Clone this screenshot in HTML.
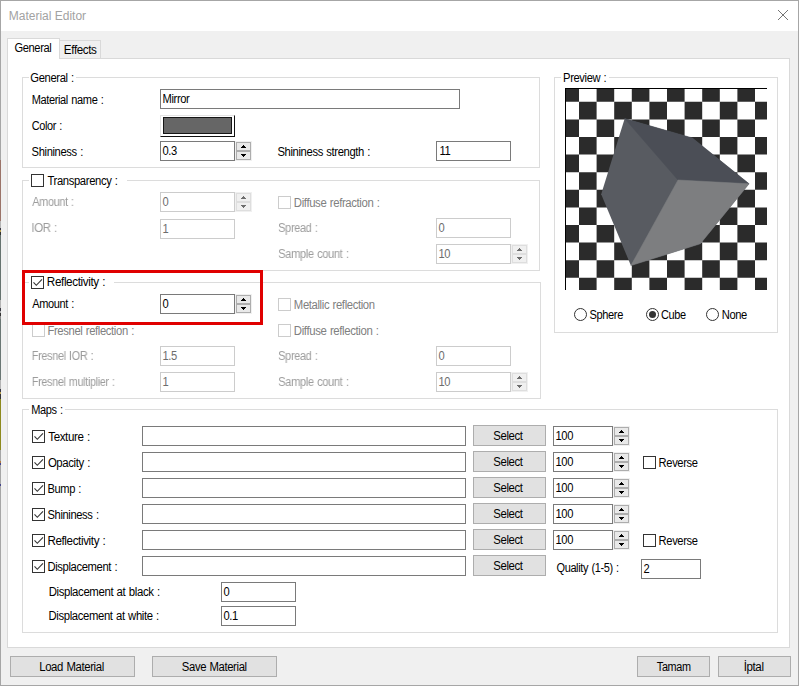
<!DOCTYPE html>
<html lang="tr"><head><meta charset="utf-8"><title>Material Editor</title>
<style>
html,body{margin:0;padding:0;background:#f0f0f0;}
body{width:799px;height:686px;overflow:hidden;position:relative;font-family:"Liberation Sans",sans-serif;font-size:12px;}
#win{position:absolute;left:0;top:0;width:799px;height:686px;background:#f0f0f0;box-shadow:inset 0 0 0 1px #a6a6a6;}
#win div{position:absolute;box-sizing:border-box;}
span.t,span.td,span.tt,span.tv,span.tc{position:absolute;white-space:pre;font-size:12px;line-height:14px;color:#000;transform-origin:0 0;}
span.t,span.td,span.tv,span.tc{letter-spacing:-0.4px;word-spacing:0.7px;}
span.tv{color:#6d6d6d;}
span.tc{color:#808080;}
span.td{color:#9c9c9c;will-change:transform;}
span.tt{color:#a2a2a2;line-height:14px;}
#lb{position:absolute;left:0;top:0;width:1px;height:686px;background:linear-gradient(to bottom,#a6a6a6 0px,#a6a6a6 160px,#9b7469 160px,#9b7469 221px,#b4b4b4 221px,#b4b4b4 228px,#3a3a44 228px,#3a3a44 230px,#b8a050 230px,#b8a050 232px,#333 232px,#333 235px,#66736f 235px,#66736f 300px,#b4b4b4 300px,#b4b4b4 308px,#3a3a44 308px,#3a3a44 311px,#aaa 311px,#aaa 313px,#333 313px,#333 316px,#888 316px,#888 319px,#6a7774 319px,#6a7774 380px,#b4b4b4 380px,#b4b4b4 389px,#3a3a44 389px,#3a3a44 392px,#b8a050 392px,#b8a050 394px,#333 394px,#333 399px,#8e8a1e 399px,#8e8a1e 450px,#a6a6a6 450px,#a6a6a6 461px,#b07a40 461px,#b07a40 463px,#44448a 463px,#44448a 465px,#a6a6a6 465px,#a6a6a6 484px,#44448a 484px,#44448a 486px,#a6a6a6 486px,#a6a6a6 686px);}
</style></head>
<body>
<div id="win">
<div class="titlebar" style="left:1px;top:1px;width:797px;height:30px;background:#fff;"></div>
<span id="t1" class="tt" style="left:8px;top:9px;transform:translateX(0.75px) scaleX(1.0000);">Material Editor</span>
<svg style="position:absolute;left:777px;top:9px" width="12" height="12" viewBox="0 0 12 12"><path d="M1 1 L11 11 M11 1 L1 11" stroke="#747474" stroke-width="1" fill="none"/></svg>
<div class="tabpage" style="left:7px;top:58px;width:783px;height:590px;border:1px solid #d9d9d9;background:#fff;"></div>
<div class="tab" style="left:59px;top:40px;width:42px;height:19px;border:1px solid #d9d9d9;background:#f0f0f0;"></div>
<div class="tab selected" style="left:7px;top:38px;width:53px;height:21px;border:1px solid #d9d9d9;border-bottom:none;background:#fff;"></div>
<span id="t2" class="t" style="left:14px;top:41px;transform:translateX(0.40px) scaleX(0.9272);">General</span>
<span id="t3" class="t" style="left:63px;top:43px;transform:translateX(0.85px) scaleX(0.9719);">Effects</span>
<div class="groupbox" style="left:22px;top:77px;width:518px;height:91px;border:1px solid #dcdcdc;border-top:none;"></div>
<div style="left:22px;top:77px;width:7px;height:1px;background:#dcdcdc;"></div>
<div style="left:76px;top:77px;width:464px;height:1px;background:#dcdcdc;"></div>
<span id="t4" class="t" style="left:30px;top:71px;transform:translateX(0.37px) scaleX(0.9355);">General :</span>
<span id="t5" class="t" style="left:31px;top:93px;transform:translateX(0.63px) scaleX(0.9201);">Material name :</span>
<div class="textbox" style="left:160px;top:89px;width:300px;height:20px;border:1px solid #7a7a7a;background:#fff;"></div>
<span id="t6" class="t" style="left:162px;top:92px;transform:translateX(0.50px) scaleX(0.9300);">Mirror</span>
<span id="t7" class="t" style="left:31px;top:119px;transform:translateX(0.72px) scaleX(0.9094);">Color :</span>
<div style="left:160px;top:115px;width:75px;height:22px;background:#fff;border-top:1px solid #e3e3e3;border-left:1px solid #e3e3e3;border-right:1px solid #111;border-bottom:1px solid #111;"></div>
<div style="left:163px;top:117px;width:69px;height:17px;background:#666666;border:1px solid #161616;"></div>
<span id="t8" class="t" style="left:31px;top:145px;transform:translateX(0.59px) scaleX(0.9323);">Shininess :</span>
<div class="textbox" style="left:160px;top:141px;width:75px;height:20px;border:1px solid #7a7a7a;background:#fff;"></div>
<span id="t9" class="t" style="left:162px;top:144px;transform:translateX(0.50px) scaleX(0.9300);">0.3</span>
<div style="left:235px;top:141px;width:17px;height:20px;background:#f0f0f0;"></div>
<div class="spin-btn" style="left:236px;top:142px;width:15px;height:9px;border:1px solid #adadad;background:#e9e9e9;"></div>
<div style="left:243px;top:145px;width:1px;height:1px;background:#000;"></div>
<div style="left:242px;top:146px;width:3px;height:1px;background:#000;"></div>
<div style="left:241px;top:147px;width:5px;height:1px;background:#000;"></div>
<div class="spin-btn" style="left:236px;top:151px;width:15px;height:9px;border:1px solid #adadad;background:#e9e9e9;"></div>
<div style="left:241px;top:154px;width:5px;height:1px;background:#000;"></div>
<div style="left:242px;top:155px;width:3px;height:1px;background:#000;"></div>
<div style="left:243px;top:156px;width:1px;height:1px;background:#000;"></div>
<span id="t10" class="t" style="left:277px;top:145px;transform:translateX(0.49px) scaleX(0.9371);">Shininess strength :</span>
<div class="textbox" style="left:436px;top:141px;width:75px;height:20px;border:1px solid #7a7a7a;background:#fff;"></div>
<span id="t11" class="t" style="left:439px;top:144px;transform:translateX(0.50px) scaleX(0.9300);">11</span>
<div class="groupbox" style="left:22px;top:180px;width:518px;height:91px;border:1px solid #dcdcdc;border-top:none;"></div>
<div style="left:22px;top:180px;width:7px;height:1px;background:#dcdcdc;"></div>
<div style="left:127px;top:180px;width:413px;height:1px;background:#dcdcdc;"></div>
<div class="checkbox" style="left:31px;top:174px;width:13px;height:13px;border:1px solid #333333;background:#fff;"></div>
<span id="t12" class="t" style="left:47px;top:174px;transform:translateX(0.48px) scaleX(0.9387);">Transparency :</span>
<span id="t13" class="td" style="left:32px;top:195px;transform:translateX(0.28px) scaleX(0.9106);">Amount :</span>
<div class="textbox" style="left:160px;top:192px;width:75px;height:20px;border:1px solid #cccccc;background:#fff;"></div>
<span id="t14" class="tv" style="left:162px;top:195px;transform:translateX(0.50px) scaleX(0.9300);">0</span>
<div style="left:235px;top:192px;width:17px;height:20px;background:#f0f0f0;"></div>
<div class="spin-btn" style="left:236px;top:193px;width:15px;height:9px;border:1px solid #dedede;background:#f0f0f0;"></div>
<div style="left:243px;top:196px;width:1px;height:1px;background:#6d6d6d;"></div>
<div style="left:242px;top:197px;width:3px;height:1px;background:#6d6d6d;"></div>
<div style="left:241px;top:198px;width:5px;height:1px;background:#6d6d6d;"></div>
<div class="spin-btn" style="left:236px;top:202px;width:15px;height:9px;border:1px solid #dedede;background:#f0f0f0;"></div>
<div style="left:241px;top:205px;width:5px;height:1px;background:#6d6d6d;"></div>
<div style="left:242px;top:206px;width:3px;height:1px;background:#6d6d6d;"></div>
<div style="left:243px;top:207px;width:1px;height:1px;background:#6d6d6d;"></div>
<span id="t15" class="td" style="left:31px;top:221px;transform:translateX(0.37px) scaleX(0.9565);">IOR :</span>
<div class="textbox" style="left:160px;top:219px;width:75px;height:20px;border:1px solid #cccccc;background:#fff;"></div>
<span id="t16" class="tv" style="left:162px;top:222px;transform:translateX(0.50px) scaleX(0.9300);">1</span>
<div class="checkbox" style="left:278px;top:196px;width:13px;height:13px;border:1px solid #cccccc;background:#fff;"></div>
<span id="t17" class="tc" style="left:293px;top:196px;transform:translateX(0.86px) scaleX(0.9465);">Diffuse refraction :</span>
<span id="t18" class="td" style="left:278px;top:221px;transform:translateX(0.17px) scaleX(0.9158);">Spread :</span>
<div class="textbox" style="left:436px;top:218px;width:75px;height:20px;border:1px solid #cccccc;background:#fff;"></div>
<span id="t19" class="tv" style="left:438px;top:221px;transform:translateX(0.50px) scaleX(0.9300);">0</span>
<span id="t20" class="td" style="left:278px;top:247px;transform:translateX(0.17px) scaleX(0.9279);">Sample count :</span>
<div class="textbox" style="left:436px;top:244px;width:75px;height:20px;border:1px solid #cccccc;background:#fff;"></div>
<span id="t21" class="tv" style="left:438px;top:247px;transform:translateX(0.50px) scaleX(0.9300);">10</span>
<div style="left:511px;top:244px;width:17px;height:20px;background:#f0f0f0;"></div>
<div class="spin-btn" style="left:512px;top:245px;width:15px;height:9px;border:1px solid #dedede;background:#f0f0f0;"></div>
<div style="left:519px;top:248px;width:1px;height:1px;background:#6d6d6d;"></div>
<div style="left:518px;top:249px;width:3px;height:1px;background:#6d6d6d;"></div>
<div style="left:517px;top:250px;width:5px;height:1px;background:#6d6d6d;"></div>
<div class="spin-btn" style="left:512px;top:254px;width:15px;height:9px;border:1px solid #dedede;background:#f0f0f0;"></div>
<div style="left:517px;top:257px;width:5px;height:1px;background:#6d6d6d;"></div>
<div style="left:518px;top:258px;width:3px;height:1px;background:#6d6d6d;"></div>
<div style="left:519px;top:259px;width:1px;height:1px;background:#6d6d6d;"></div>
<div class="groupbox" style="left:22px;top:282px;width:519px;height:117px;border:1px solid #dcdcdc;border-top:none;"></div>
<div style="left:22px;top:282px;width:7px;height:1px;background:#dcdcdc;"></div>
<div style="left:114px;top:282px;width:427px;height:1px;background:#dcdcdc;"></div>
<div class="checkbox" style="left:31px;top:276px;width:13px;height:13px;border:1px solid #333333;background:#fff;"><svg width="13" height="13" viewBox="0 0 13 13" style="position:absolute;left:-1px;top:-1px"><path d="M2.5 6.3 L5.3 9.3 L11 3.3" fill="none" stroke="#333" stroke-width="1.1"/></svg></div>
<span id="t22" class="t" style="left:46px;top:275px;transform:translateX(0.86px) scaleX(0.9749);">Reflectivity :</span>
<span id="t23" class="t" style="left:32px;top:297px;transform:translateX(0.28px) scaleX(0.9174);">Amount :</span>
<div class="textbox" style="left:160px;top:294px;width:75px;height:20px;border:1px solid #7a7a7a;background:#fff;"></div>
<span id="t24" class="t" style="left:162px;top:297px;transform:translateX(0.50px) scaleX(0.9300);">0</span>
<div style="left:235px;top:294px;width:17px;height:20px;background:#f0f0f0;"></div>
<div class="spin-btn" style="left:236px;top:295px;width:15px;height:9px;border:1px solid #adadad;background:#e9e9e9;"></div>
<div style="left:243px;top:298px;width:1px;height:1px;background:#000;"></div>
<div style="left:242px;top:299px;width:3px;height:1px;background:#000;"></div>
<div style="left:241px;top:300px;width:5px;height:1px;background:#000;"></div>
<div class="spin-btn" style="left:236px;top:304px;width:15px;height:9px;border:1px solid #adadad;background:#e9e9e9;"></div>
<div style="left:241px;top:307px;width:5px;height:1px;background:#000;"></div>
<div style="left:242px;top:308px;width:3px;height:1px;background:#000;"></div>
<div style="left:243px;top:309px;width:1px;height:1px;background:#000;"></div>
<div class="checkbox" style="left:278px;top:298px;width:13px;height:13px;border:1px solid #cccccc;background:#fff;"></div>
<span id="t25" class="tc" style="left:293px;top:298px;transform:translateX(0.86px) scaleX(0.9418);">Metallic reflection</span>
<div class="checkbox" style="left:32px;top:324px;width:13px;height:13px;border:1px solid #cccccc;background:#fff;"></div>
<span id="t26" class="tc" style="left:47px;top:324px;transform:translateX(0.48px) scaleX(0.9387);">Fresnel reflection :</span>
<div class="checkbox" style="left:278px;top:324px;width:13px;height:13px;border:1px solid #cccccc;background:#fff;"></div>
<span id="t27" class="tc" style="left:293px;top:324px;transform:translateX(0.84px) scaleX(0.9506);">Diffuse reflection :</span>
<span id="t28" class="td" style="left:31px;top:349px;transform:translateX(0.73px) scaleX(0.9125);">Fresnel IOR :</span>
<div class="textbox" style="left:160px;top:346px;width:75px;height:20px;border:1px solid #cccccc;background:#fff;"></div>
<span id="t29" class="tv" style="left:162px;top:349px;transform:translateX(0.50px) scaleX(0.9300);">1.5</span>
<span id="t30" class="td" style="left:278px;top:349px;transform:translateX(0.17px) scaleX(0.9158);">Spread :</span>
<div class="textbox" style="left:436px;top:346px;width:75px;height:20px;border:1px solid #cccccc;background:#fff;"></div>
<span id="t31" class="tv" style="left:438px;top:349px;transform:translateX(0.50px) scaleX(0.9300);">0</span>
<span id="t32" class="td" style="left:31px;top:375px;transform:translateX(0.78px) scaleX(0.9064);">Fresnel multiplier :</span>
<div class="textbox" style="left:160px;top:372px;width:75px;height:20px;border:1px solid #cccccc;background:#fff;"></div>
<span id="t33" class="tv" style="left:162px;top:375px;transform:translateX(0.50px) scaleX(0.9300);">1</span>
<span id="t34" class="td" style="left:278px;top:375px;transform:translateX(0.17px) scaleX(0.9279);">Sample count :</span>
<div class="textbox" style="left:436px;top:372px;width:75px;height:20px;border:1px solid #cccccc;background:#fff;"></div>
<span id="t35" class="tv" style="left:438px;top:375px;transform:translateX(0.50px) scaleX(0.9300);">10</span>
<div style="left:511px;top:372px;width:17px;height:20px;background:#f0f0f0;"></div>
<div class="spin-btn" style="left:512px;top:373px;width:15px;height:9px;border:1px solid #dedede;background:#f0f0f0;"></div>
<div style="left:519px;top:376px;width:1px;height:1px;background:#6d6d6d;"></div>
<div style="left:518px;top:377px;width:3px;height:1px;background:#6d6d6d;"></div>
<div style="left:517px;top:378px;width:5px;height:1px;background:#6d6d6d;"></div>
<div class="spin-btn" style="left:512px;top:382px;width:15px;height:9px;border:1px solid #dedede;background:#f0f0f0;"></div>
<div style="left:517px;top:385px;width:5px;height:1px;background:#6d6d6d;"></div>
<div style="left:518px;top:386px;width:3px;height:1px;background:#6d6d6d;"></div>
<div style="left:519px;top:387px;width:1px;height:1px;background:#6d6d6d;"></div>
<div class="highlight" style="left:22px;top:270px;width:241px;height:55px;border:3px solid #e00000;"></div>
<div class="groupbox" style="left:554px;top:77px;width:224px;height:256px;border:1px solid #dcdcdc;border-top:none;"></div>
<div style="left:554px;top:77px;width:7px;height:1px;background:#dcdcdc;"></div>
<div style="left:609px;top:77px;width:169px;height:1px;background:#dcdcdc;"></div>
<span id="t36" class="t" style="left:563px;top:71px;transform:translateX(0.09px) scaleX(0.9310);">Preview :</span>
<svg style="position:absolute;left:565px;top:88px" width="202" height="202" viewBox="0 0 202 202"><rect width="202" height="202" fill="#fff"/><path d="M0.0 0.0H14.0V13.8H0.0ZM31.6 0.0H49.2V13.8H31.6ZM66.8 0.0H84.4V13.8H66.8ZM102.0 0.0H119.6V13.8H102.0ZM137.2 0.0H154.8V13.8H137.2ZM172.4 0.0H190.0V13.8H172.4ZM14.0 13.8H31.6V31.4H14.0ZM49.2 13.8H66.8V31.4H49.2ZM84.4 13.8H102.0V31.4H84.4ZM119.6 13.8H137.2V31.4H119.6ZM154.8 13.8H172.4V31.4H154.8ZM190.0 13.8H202.0V31.4H190.0ZM0.0 31.4H14.0V49.0H0.0ZM31.6 31.4H49.2V49.0H31.6ZM66.8 31.4H84.4V49.0H66.8ZM102.0 31.4H119.6V49.0H102.0ZM137.2 31.4H154.8V49.0H137.2ZM172.4 31.4H190.0V49.0H172.4ZM14.0 49.0H31.6V66.6H14.0ZM49.2 49.0H66.8V66.6H49.2ZM84.4 49.0H102.0V66.6H84.4ZM119.6 49.0H137.2V66.6H119.6ZM154.8 49.0H172.4V66.6H154.8ZM190.0 49.0H202.0V66.6H190.0ZM0.0 66.6H14.0V84.2H0.0ZM31.6 66.6H49.2V84.2H31.6ZM66.8 66.6H84.4V84.2H66.8ZM102.0 66.6H119.6V84.2H102.0ZM137.2 66.6H154.8V84.2H137.2ZM172.4 66.6H190.0V84.2H172.4ZM14.0 84.2H31.6V101.8H14.0ZM49.2 84.2H66.8V101.8H49.2ZM84.4 84.2H102.0V101.8H84.4ZM119.6 84.2H137.2V101.8H119.6ZM154.8 84.2H172.4V101.8H154.8ZM190.0 84.2H202.0V101.8H190.0ZM0.0 101.8H14.0V119.4H0.0ZM31.6 101.8H49.2V119.4H31.6ZM66.8 101.8H84.4V119.4H66.8ZM102.0 101.8H119.6V119.4H102.0ZM137.2 101.8H154.8V119.4H137.2ZM172.4 101.8H190.0V119.4H172.4ZM14.0 119.4H31.6V137.0H14.0ZM49.2 119.4H66.8V137.0H49.2ZM84.4 119.4H102.0V137.0H84.4ZM119.6 119.4H137.2V137.0H119.6ZM154.8 119.4H172.4V137.0H154.8ZM190.0 119.4H202.0V137.0H190.0ZM0.0 137.0H14.0V154.6H0.0ZM31.6 137.0H49.2V154.6H31.6ZM66.8 137.0H84.4V154.6H66.8ZM102.0 137.0H119.6V154.6H102.0ZM137.2 137.0H154.8V154.6H137.2ZM172.4 137.0H190.0V154.6H172.4ZM14.0 154.6H31.6V172.2H14.0ZM49.2 154.6H66.8V172.2H49.2ZM84.4 154.6H102.0V172.2H84.4ZM119.6 154.6H137.2V172.2H119.6ZM154.8 154.6H172.4V172.2H154.8ZM190.0 154.6H202.0V172.2H190.0ZM0.0 172.2H14.0V189.8H0.0ZM31.6 172.2H49.2V189.8H31.6ZM66.8 172.2H84.4V189.8H66.8ZM102.0 172.2H119.6V189.8H102.0ZM137.2 172.2H154.8V189.8H137.2ZM172.4 172.2H190.0V189.8H172.4ZM14.0 189.8H31.6V202.0H14.0ZM49.2 189.8H66.8V202.0H49.2ZM84.4 189.8H102.0V202.0H84.4ZM119.6 189.8H137.2V202.0H119.6ZM154.8 189.8H172.4V202.0H154.8ZM190.0 189.8H202.0V202.0H190.0Z" fill="#2b2b2b"/><polygon points="59.7,30.6 127.3,49.9 184.1,95.8 135.3,155.8 65.9,177.6 36.2,106.2" fill="#585b61"/><polygon points="59.7,30.6 127.3,49.9 184.1,95.8 113.0,92.0" fill="#4b4e56" stroke="#4b4e56" stroke-width="0.5" stroke-linejoin="round"/><polygon points="113.0,92.0 184.1,95.8 135.3,155.8 65.9,177.6" fill="#7d7e80" stroke="#7d7e80" stroke-width="0.5" stroke-linejoin="round"/><rect x="0" y="0" width="202" height="1" fill="#000"/><rect x="0" y="0" width="1" height="202" fill="#000"/></svg>
<div class="radio" style="left:574px;top:308px;width:13px;height:13px;border:1px solid #333;border-radius:50%;background:#fff;"></div>
<span id="t37" class="t" style="left:589px;top:308px;transform:translateX(0.51px) scaleX(0.9211);">Sphere</span>
<div class="radio" style="left:646px;top:308px;width:13px;height:13px;border:1px solid #333;border-radius:50%;background:#fff;"><div style="left:2px;top:2px;width:7px;height:7px;border-radius:50%;background:#333;"></div></div>
<span id="t38" class="t" style="left:660px;top:308px;transform:translateX(0.91px) scaleX(0.9129);">Cube</span>
<div class="radio" style="left:706px;top:308px;width:13px;height:13px;border:1px solid #333;border-radius:50%;background:#fff;"></div>
<span id="t39" class="t" style="left:721px;top:308px;transform:translateX(0.74px) scaleX(0.9312);">None</span>
<div class="groupbox" style="left:22px;top:409px;width:756px;height:224px;border:1px solid #dcdcdc;border-top:none;"></div>
<div style="left:22px;top:409px;width:7px;height:1px;background:#dcdcdc;"></div>
<div style="left:65px;top:409px;width:713px;height:1px;background:#dcdcdc;"></div>
<span id="t40" class="t" style="left:31px;top:403px;transform:translateX(0.22px) scaleX(0.9180);">Maps :</span>
<div class="checkbox" style="left:32px;top:430px;width:13px;height:13px;border:1px solid #333333;background:#fff;"><svg width="13" height="13" viewBox="0 0 13 13" style="position:absolute;left:-1px;top:-1px"><path d="M2.5 6.3 L5.3 9.3 L11 3.3" fill="none" stroke="#333" stroke-width="1.1"/></svg></div>
<span id="t41" class="t" style="left:48px;top:430px;transform:translateX(0.21px) scaleX(0.9670);">Texture :</span>
<div class="textbox" style="left:142px;top:426px;width:324px;height:20px;border:1px solid #7a7a7a;background:#fff;"></div>
<div class="button" style="left:473px;top:425px;width:73px;height:21px;border:1px solid #adadad;background:#e1e1e1;"></div>
<span id="t42" class="t" style="left:493px;top:429px;transform:translateX(0.25px) scaleX(0.9473);">Select</span>
<div class="textbox" style="left:553px;top:426px;width:60px;height:20px;border:1px solid #7a7a7a;background:#fff;"></div>
<span id="t43" class="t" style="left:555px;top:429px;transform:translateX(0.50px) scaleX(0.9300);">100</span>
<div style="left:613px;top:426px;width:17px;height:20px;background:#f0f0f0;"></div>
<div class="spin-btn" style="left:614px;top:427px;width:15px;height:9px;border:1px solid #adadad;background:#e9e9e9;"></div>
<div style="left:621px;top:430px;width:1px;height:1px;background:#000;"></div>
<div style="left:620px;top:431px;width:3px;height:1px;background:#000;"></div>
<div style="left:619px;top:432px;width:5px;height:1px;background:#000;"></div>
<div class="spin-btn" style="left:614px;top:436px;width:15px;height:9px;border:1px solid #adadad;background:#e9e9e9;"></div>
<div style="left:619px;top:439px;width:5px;height:1px;background:#000;"></div>
<div style="left:620px;top:440px;width:3px;height:1px;background:#000;"></div>
<div style="left:621px;top:441px;width:1px;height:1px;background:#000;"></div>
<div class="checkbox" style="left:32px;top:456px;width:13px;height:13px;border:1px solid #333333;background:#fff;"><svg width="13" height="13" viewBox="0 0 13 13" style="position:absolute;left:-1px;top:-1px"><path d="M2.5 6.3 L5.3 9.3 L11 3.3" fill="none" stroke="#333" stroke-width="1.1"/></svg></div>
<span id="t44" class="t" style="left:47px;top:456px;transform:translateX(0.89px) scaleX(0.9484);">Opacity :</span>
<div class="textbox" style="left:142px;top:452px;width:324px;height:20px;border:1px solid #7a7a7a;background:#fff;"></div>
<div class="button" style="left:473px;top:451px;width:73px;height:21px;border:1px solid #adadad;background:#e1e1e1;"></div>
<span id="t45" class="t" style="left:493px;top:455px;transform:translateX(0.25px) scaleX(0.9473);">Select</span>
<div class="textbox" style="left:553px;top:452px;width:60px;height:20px;border:1px solid #7a7a7a;background:#fff;"></div>
<span id="t46" class="t" style="left:555px;top:455px;transform:translateX(0.50px) scaleX(0.9300);">100</span>
<div style="left:613px;top:452px;width:17px;height:20px;background:#f0f0f0;"></div>
<div class="spin-btn" style="left:614px;top:453px;width:15px;height:9px;border:1px solid #adadad;background:#e9e9e9;"></div>
<div style="left:621px;top:456px;width:1px;height:1px;background:#000;"></div>
<div style="left:620px;top:457px;width:3px;height:1px;background:#000;"></div>
<div style="left:619px;top:458px;width:5px;height:1px;background:#000;"></div>
<div class="spin-btn" style="left:614px;top:462px;width:15px;height:9px;border:1px solid #adadad;background:#e9e9e9;"></div>
<div style="left:619px;top:465px;width:5px;height:1px;background:#000;"></div>
<div style="left:620px;top:466px;width:3px;height:1px;background:#000;"></div>
<div style="left:621px;top:467px;width:1px;height:1px;background:#000;"></div>
<div class="checkbox" style="left:643px;top:456px;width:13px;height:13px;border:1px solid #333333;background:#fff;"></div>
<span id="t47" class="t" style="left:658px;top:456px;transform:translateX(0.62px) scaleX(0.9296);">Reverse</span>
<div class="checkbox" style="left:32px;top:482px;width:13px;height:13px;border:1px solid #333333;background:#fff;"><svg width="13" height="13" viewBox="0 0 13 13" style="position:absolute;left:-1px;top:-1px"><path d="M2.5 6.3 L5.3 9.3 L11 3.3" fill="none" stroke="#333" stroke-width="1.1"/></svg></div>
<span id="t48" class="t" style="left:47px;top:482px;transform:translateX(0.50px) scaleX(0.9247);">Bump :</span>
<div class="textbox" style="left:142px;top:478px;width:324px;height:20px;border:1px solid #7a7a7a;background:#fff;"></div>
<div class="button" style="left:473px;top:477px;width:73px;height:21px;border:1px solid #adadad;background:#e1e1e1;"></div>
<span id="t49" class="t" style="left:493px;top:481px;transform:translateX(0.25px) scaleX(0.9473);">Select</span>
<div class="textbox" style="left:553px;top:478px;width:60px;height:20px;border:1px solid #7a7a7a;background:#fff;"></div>
<span id="t50" class="t" style="left:555px;top:481px;transform:translateX(0.50px) scaleX(0.9300);">100</span>
<div style="left:613px;top:478px;width:17px;height:20px;background:#f0f0f0;"></div>
<div class="spin-btn" style="left:614px;top:479px;width:15px;height:9px;border:1px solid #adadad;background:#e9e9e9;"></div>
<div style="left:621px;top:482px;width:1px;height:1px;background:#000;"></div>
<div style="left:620px;top:483px;width:3px;height:1px;background:#000;"></div>
<div style="left:619px;top:484px;width:5px;height:1px;background:#000;"></div>
<div class="spin-btn" style="left:614px;top:488px;width:15px;height:9px;border:1px solid #adadad;background:#e9e9e9;"></div>
<div style="left:619px;top:491px;width:5px;height:1px;background:#000;"></div>
<div style="left:620px;top:492px;width:3px;height:1px;background:#000;"></div>
<div style="left:621px;top:493px;width:1px;height:1px;background:#000;"></div>
<div class="checkbox" style="left:32px;top:508px;width:13px;height:13px;border:1px solid #333333;background:#fff;"><svg width="13" height="13" viewBox="0 0 13 13" style="position:absolute;left:-1px;top:-1px"><path d="M2.5 6.3 L5.3 9.3 L11 3.3" fill="none" stroke="#333" stroke-width="1.1"/></svg></div>
<span id="t51" class="t" style="left:47px;top:508px;transform:translateX(0.52px) scaleX(0.9293);">Shininess :</span>
<div class="textbox" style="left:142px;top:504px;width:324px;height:20px;border:1px solid #7a7a7a;background:#fff;"></div>
<div class="button" style="left:473px;top:503px;width:73px;height:21px;border:1px solid #adadad;background:#e1e1e1;"></div>
<span id="t52" class="t" style="left:493px;top:507px;transform:translateX(0.25px) scaleX(0.9473);">Select</span>
<div class="textbox" style="left:553px;top:504px;width:60px;height:20px;border:1px solid #7a7a7a;background:#fff;"></div>
<span id="t53" class="t" style="left:555px;top:507px;transform:translateX(0.50px) scaleX(0.9300);">100</span>
<div style="left:613px;top:504px;width:17px;height:20px;background:#f0f0f0;"></div>
<div class="spin-btn" style="left:614px;top:505px;width:15px;height:9px;border:1px solid #adadad;background:#e9e9e9;"></div>
<div style="left:621px;top:508px;width:1px;height:1px;background:#000;"></div>
<div style="left:620px;top:509px;width:3px;height:1px;background:#000;"></div>
<div style="left:619px;top:510px;width:5px;height:1px;background:#000;"></div>
<div class="spin-btn" style="left:614px;top:514px;width:15px;height:9px;border:1px solid #adadad;background:#e9e9e9;"></div>
<div style="left:619px;top:517px;width:5px;height:1px;background:#000;"></div>
<div style="left:620px;top:518px;width:3px;height:1px;background:#000;"></div>
<div style="left:621px;top:519px;width:1px;height:1px;background:#000;"></div>
<div class="checkbox" style="left:32px;top:534px;width:13px;height:13px;border:1px solid #333333;background:#fff;"><svg width="13" height="13" viewBox="0 0 13 13" style="position:absolute;left:-1px;top:-1px"><path d="M2.5 6.3 L5.3 9.3 L11 3.3" fill="none" stroke="#333" stroke-width="1.1"/></svg></div>
<span id="t54" class="t" style="left:47px;top:534px;transform:translateX(0.38px) scaleX(0.9713);">Reflectivity :</span>
<div class="textbox" style="left:142px;top:530px;width:324px;height:20px;border:1px solid #7a7a7a;background:#fff;"></div>
<div class="button" style="left:473px;top:529px;width:73px;height:21px;border:1px solid #adadad;background:#e1e1e1;"></div>
<span id="t55" class="t" style="left:493px;top:533px;transform:translateX(0.25px) scaleX(0.9473);">Select</span>
<div class="textbox" style="left:553px;top:530px;width:60px;height:20px;border:1px solid #7a7a7a;background:#fff;"></div>
<span id="t56" class="t" style="left:555px;top:533px;transform:translateX(0.50px) scaleX(0.9300);">100</span>
<div style="left:613px;top:530px;width:17px;height:20px;background:#f0f0f0;"></div>
<div class="spin-btn" style="left:614px;top:531px;width:15px;height:9px;border:1px solid #adadad;background:#e9e9e9;"></div>
<div style="left:621px;top:534px;width:1px;height:1px;background:#000;"></div>
<div style="left:620px;top:535px;width:3px;height:1px;background:#000;"></div>
<div style="left:619px;top:536px;width:5px;height:1px;background:#000;"></div>
<div class="spin-btn" style="left:614px;top:540px;width:15px;height:9px;border:1px solid #adadad;background:#e9e9e9;"></div>
<div style="left:619px;top:543px;width:5px;height:1px;background:#000;"></div>
<div style="left:620px;top:544px;width:3px;height:1px;background:#000;"></div>
<div style="left:621px;top:545px;width:1px;height:1px;background:#000;"></div>
<div class="checkbox" style="left:643px;top:534px;width:13px;height:13px;border:1px solid #333333;background:#fff;"></div>
<span id="t57" class="t" style="left:658px;top:534px;transform:translateX(0.62px) scaleX(0.9296);">Reverse</span>
<div class="checkbox" style="left:32px;top:560px;width:13px;height:13px;border:1px solid #333333;background:#fff;"><svg width="13" height="13" viewBox="0 0 13 13" style="position:absolute;left:-1px;top:-1px"><path d="M2.5 6.3 L5.3 9.3 L11 3.3" fill="none" stroke="#333" stroke-width="1.1"/></svg></div>
<span id="t58" class="t" style="left:47px;top:560px;transform:translateX(0.49px) scaleX(0.9366);">Displacement :</span>
<div class="textbox" style="left:142px;top:556px;width:324px;height:20px;border:1px solid #7a7a7a;background:#fff;"></div>
<div class="button" style="left:473px;top:555px;width:73px;height:21px;border:1px solid #adadad;background:#e1e1e1;"></div>
<span id="t59" class="t" style="left:493px;top:559px;transform:translateX(0.25px) scaleX(0.9473);">Select</span>
<span id="t60" class="t" style="left:556px;top:561px;transform:translateX(0.49px) scaleX(0.9137);">Quality (1-5) :</span>
<div class="textbox" style="left:641px;top:559px;width:60px;height:20px;border:1px solid #7a7a7a;background:#fff;"></div>
<span id="t61" class="t" style="left:643px;top:562px;transform:translateX(0.50px) scaleX(0.9300);">2</span>
<span id="t62" class="t" style="left:48px;top:585px;transform:translateX(0.67px) scaleX(0.9500);">Displacement at black :</span>
<div class="textbox" style="left:221px;top:582px;width:75px;height:20px;border:1px solid #7a7a7a;background:#fff;"></div>
<span id="t63" class="t" style="left:223px;top:585px;transform:translateX(0.50px) scaleX(0.9300);">0</span>
<span id="t64" class="t" style="left:48px;top:609px;transform:translateX(0.56px) scaleX(0.9428);">Displacement at white :</span>
<div class="textbox" style="left:221px;top:606px;width:75px;height:20px;border:1px solid #7a7a7a;background:#fff;"></div>
<span id="t65" class="t" style="left:223px;top:609px;transform:translateX(0.50px) scaleX(0.9300);">0.1</span>
<div class="button" style="left:10px;top:656px;width:125px;height:21px;border:1px solid #adadad;background:#e1e1e1;"></div>
<span id="t66" class="t" style="left:39px;top:660px;transform:translateX(0.24px) scaleX(0.9468);">Load Material</span>
<div class="button" style="left:152px;top:656px;width:125px;height:21px;border:1px solid #adadad;background:#e1e1e1;"></div>
<span id="t67" class="t" style="left:181px;top:660px;transform:translateX(0.87px) scaleX(0.9410);">Save Material</span>
<div class="button" style="left:637px;top:656px;width:73px;height:21px;border:1px solid #adadad;background:#e1e1e1;"></div>
<span id="t68" class="t" style="left:656px;top:660px;transform:translateX(0.82px) scaleX(0.9040);">Tamam</span>
<div class="button" style="left:718px;top:656px;width:73px;height:21px;border:1px solid #adadad;background:#e1e1e1;"></div>
<span id="t69" class="t" style="left:743px;top:660px;transform:translateX(0.66px) scaleX(0.9627);">İptal</span>
</div>
<div id="lb"></div>
</body></html>
